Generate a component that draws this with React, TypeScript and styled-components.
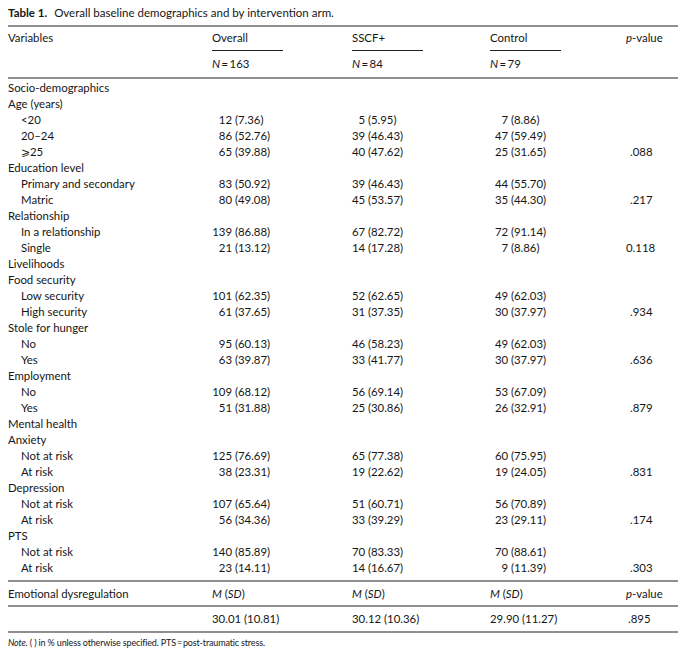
import React from "react";
import styled, { createGlobalStyle } from "styled-components";

const Global = createGlobalStyle`
  html, body { margin: 0; padding: 0; background: #fff; }
  body { font-family: Lato, "Open Sans", "Liberation Sans", sans-serif; color: #161616; }
`;

const COLS = "204px 140px 138px 136px 52px";

const Page = styled.div`
  padding: 5px 8px 0 8px;
  width: 670px;
`;

const Caption = styled.div`
  font-size: 11.5px;
  line-height: 16px;
  white-space: nowrap;
`;

const CapLabel = styled.span`
  font-weight: 700;
  margin-right: 4px;
`;

const Table = styled.div`
  margin-top: 4px;
  border-top: 2px solid #8f8f8f;
  font-size: 11.4px;
`;

const Section = styled.div<{ $pt?: number; $pb?: number }>`
  padding-top: ${(p) => p.$pt ?? 0}px;
  padding-bottom: ${(p) => p.$pb ?? 0}px;
  border-bottom: 2px solid #8f8f8f;
`;

const Row = styled.div<{ $h?: number; $align?: string }>`
  display: grid;
  grid-template-columns: ${COLS};
  align-items: ${(p) => p.$align ?? "center"};
  height: ${(p) => p.$h ?? 16}px;
  line-height: 16px;
  white-space: nowrap;
`;

const Label = styled.div<{ $indent?: boolean }>`
  padding-left: ${(p) => (p.$indent ? 13 : 0)}px;
`;

const ColHead = styled.div`
  width: 71px;
  padding-bottom: 4px;
  border-bottom: 1px solid #222;
`;

const Cell = styled.div<{ $pl?: number }>`
  padding-left: ${(p) => p.$pl ?? 0}px;
`;

const Count = styled.span<{ $w: number }>`
  display: inline-block;
  width: ${(p) => p.$w}px;
  text-align: right;
`;

const It = styled.i`
  font-style: italic;
`;

const Note = styled.div`
  margin-top: 2px;
  font-size: 9px;
  letter-spacing: -0.15px;
  line-height: 16px;
`;

type V = [number, string];
type R = {
  label: string;
  indent?: boolean;
  o?: V;
  s?: V;
  c?: V;
  p?: string;
};

const rows: R[] = [
  { label: "Socio-demographics" },
  { label: "Age (years)" },
  { label: "<20", indent: true, o: [12, "7.36"], s: [5, "5.95"], c: [7, "8.86"] },
  { label: "20–24", indent: true, o: [86, "52.76"], s: [39, "46.43"], c: [47, "59.49"] },
  { label: "⩾25", indent: true, o: [65, "39.88"], s: [40, "47.62"], c: [25, "31.65"], p: ".088" },
  { label: "Education level" },
  { label: "Primary and secondary", indent: true, o: [83, "50.92"], s: [39, "46.43"], c: [44, "55.70"] },
  { label: "Matric", indent: true, o: [80, "49.08"], s: [45, "53.57"], c: [35, "44.30"], p: ".217" },
  { label: "Relationship" },
  { label: "In a relationship", indent: true, o: [139, "86.88"], s: [67, "82.72"], c: [72, "91.14"] },
  { label: "Single", indent: true, o: [21, "13.12"], s: [14, "17.28"], c: [7, "8.86"], p: "0.118" },
  { label: "Livelihoods" },
  { label: "Food security" },
  { label: "Low security", indent: true, o: [101, "62.35"], s: [52, "62.65"], c: [49, "62.03"] },
  { label: "High security", indent: true, o: [61, "37.65"], s: [31, "37.35"], c: [30, "37.97"], p: ".934" },
  { label: "Stole for hunger" },
  { label: "No", indent: true, o: [95, "60.13"], s: [46, "58.23"], c: [49, "62.03"] },
  { label: "Yes", indent: true, o: [63, "39.87"], s: [33, "41.77"], c: [30, "37.97"], p: ".636" },
  { label: "Employment" },
  { label: "No", indent: true, o: [109, "68.12"], s: [56, "69.14"], c: [53, "67.09"] },
  { label: "Yes", indent: true, o: [51, "31.88"], s: [25, "30.86"], c: [26, "32.91"], p: ".879" },
  { label: "Mental health" },
  { label: "Anxiety" },
  { label: "Not at risk", indent: true, o: [125, "76.69"], s: [65, "77.38"], c: [60, "75.95"] },
  { label: "At risk", indent: true, o: [38, "23.31"], s: [19, "22.62"], c: [19, "24.05"], p: ".831" },
  { label: "Depression" },
  { label: "Not at risk", indent: true, o: [107, "65.64"], s: [51, "60.71"], c: [56, "70.89"] },
  { label: "At risk", indent: true, o: [56, "34.36"], s: [33, "39.29"], c: [23, "29.11"], p: ".174" },
  { label: "PTS" },
  { label: "Not at risk", indent: true, o: [140, "85.89"], s: [70, "83.33"], c: [70, "88.61"] },
  { label: "At risk", indent: true, o: [23, "14.11"], s: [14, "16.67"], c: [9, "11.39"], p: ".303" },
];

const Val: React.FC<{ v?: V; w: number; pl?: number }> = ({ v, w, pl }) => (
  <Cell $pl={pl}>
    {v ? (
      <>
        <Count $w={w}>{v[0]}</Count> ({v[1]})
      </>
    ) : null}
  </Cell>
);

const PVal: React.FC<{ p?: string }> = ({ p }) => (
  <Cell $pl={p && p.startsWith(".") ? 4 : 0}>{p}</Cell>
);

export default function App() {
  return (
    <Page>
      <Global />
      <Caption>
        <CapLabel>Table 1.</CapLabel> Overall baseline demographics and by intervention arm.
      </Caption>
      <Table>
        <Section $pt={3} $pb={5}>
          <Row $h={21} $align="start">
            <Label>Variables</Label>
            <ColHead>Overall</ColHead>
            <ColHead>SSCF+</ColHead>
            <ColHead>Control</ColHead>
            <Cell>
              <It>p</It>-value
            </Cell>
          </Row>
          <Row $h={21} $align="end">
            <Label />
            <Cell>
              <It>N</It>&#8201;=&#8201;163
            </Cell>
            <Cell>
              <It>N</It>&#8201;=&#8201;84
            </Cell>
            <Cell>
              <It>N</It>&#8201;=&#8201;79
            </Cell>
            <Cell />
          </Row>
        </Section>
        <Section $pt={1} $pb={4}>
          {rows.map((r, i) => (
            <Row key={i}>
              <Label $indent={r.indent}>{r.label}</Label>
              <Val v={r.o} w={20} />
              <Val v={r.s} w={13} />
              <Val v={r.c} w={13} pl={5} />
              <PVal p={r.p} />
            </Row>
          ))}
        </Section>
        <Section>
          <Row $h={23}>
            <Label>Emotional dysregulation</Label>
            <Cell>
              <It>M</It> (<It>SD</It>)
            </Cell>
            <Cell>
              <It>M</It> (<It>SD</It>)
            </Cell>
            <Cell>
              <It>M</It> (<It>SD</It>)
            </Cell>
            <Cell>
              <It>p</It>-value
            </Cell>
          </Row>
        </Section>
        <Section>
          <Row $h={24}>
            <Label />
            <Cell>30.01 (10.81)</Cell>
            <Cell>30.12 (10.36)</Cell>
            <Cell>29.90 (11.27)</Cell>
            <Cell $pl={2}>.895</Cell>
          </Row>
        </Section>
      </Table>
      <Note>
        <It>Note.</It> ( ) in % unless otherwise specified. PTS&#8201;=&#8201;post-traumatic stress.
      </Note>
    </Page>
  );
}
